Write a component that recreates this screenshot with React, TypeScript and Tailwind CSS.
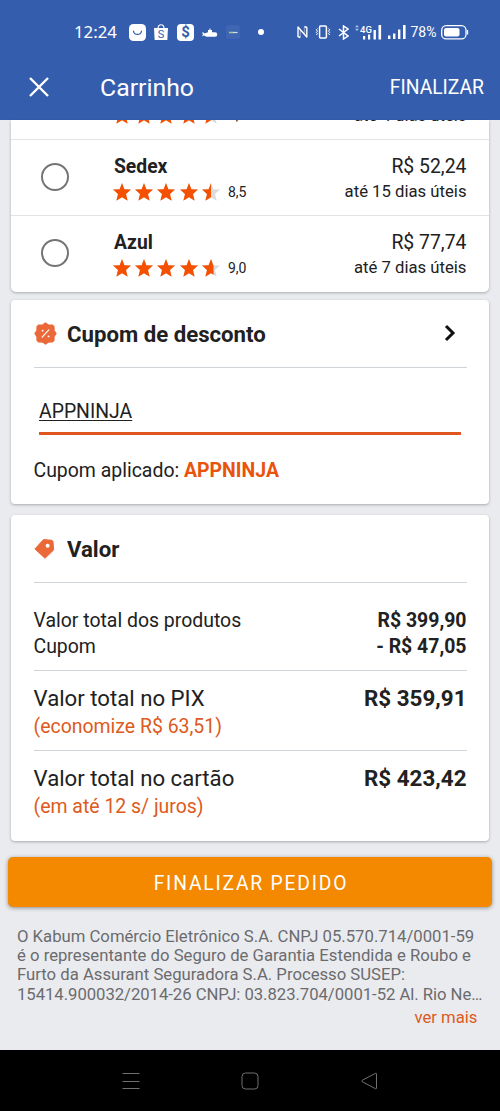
import React from "react";
import clsx from "clsx";

type Shipping = {
  name: string;
  score: string;
  lastStar: number;
  price: string;
  deadline: string;
};

const SHIPPINGS: Shipping[] = [
  { name: "Sedex", score: "8,5", lastStar: 0.5, price: "R$ 52,24", deadline: "até 15 dias úteis" },
  { name: "Azul", score: "9,0", lastStar: 0.64, price: "R$ 77,74", deadline: "até 7 dias úteis" },
];

const STAR = "M9 0 11.4 6.2 18 6.6 13 11 14.7 17.8 9 14.2 3.3 17.8 5 11 0 6.6 6.6 6.2Z";

const Star = ({ fill = 1 }: { fill?: number }) => (
  <svg width="18" height="18" viewBox="0 0 18 18">
    <path d={STAR} fill="#dcdcdc" />
    <path d={STAR} fill="#f45000" style={{ clipPath: `inset(0 ${(1 - fill) * 100}% 0 0)` }} />
  </svg>
);

const Rating = ({ score, lastStar }: { score: string; lastStar: number }) => (
  <div className="-ml-px flex h-[18px] items-center gap-[4.2px]">
    <Star />
    <Star />
    <Star />
    <Star />
    <Star fill={lastStar} />
    <span className="ml-[4px] text-[14px] leading-[17px]">{score}</span>
  </div>
);

const StatusBar = () => (
  <div className="flex h-[63px] items-center pt-px pl-[74px] text-white">
    <span className="w-[43px] font-['Noto_Sans',sans-serif] text-[16.8px] leading-none">12:24</span>
    <svg className="ml-[12px]" width="17" height="17" viewBox="0 0 17 17">
      <rect width="17" height="17" rx="4.5" fill="#fff" />
      <path d="M4.5 7c.5 4.5 7.5 4.5 8 0" fill="none" stroke="#355dae" strokeWidth="1.2" strokeLinecap="round" />
    </svg>
    <div className="relative ml-2 h-4 w-[14px]">
      <svg width="14" height="16" viewBox="0 0 14 16">
        <path d="M0 4h14l-.7 12H.7Z" fill="#fff" />
        <path d="M4 4.5c0-5 6-5 6 0" fill="none" stroke="#fff" strokeWidth="1.2" />
      </svg>
      <span className="absolute inset-x-0 top-[4.5px] text-center text-[11px] leading-[12px] text-[#355dae]">S</span>
    </div>
    <div className="ml-[9px] flex h-[17px] w-[17px] items-center justify-center rounded-[4px] bg-white text-[15px] leading-none font-bold text-[#355dae]">
      $
    </div>
    <svg className="mt-px ml-2" width="16" height="10" viewBox="0 0 16 10">
      <path d="M0 4.5h1.5l1 1L6 4.3V2h1.5V.5h1V2H10v2.2h3a2.3 2.3 0 0 1 0 4.6H4.5L2 7.5l-2 .8L1 6.5Z" fill="#fff" />
    </svg>
    <svg className="ml-2" width="14" height="14" viewBox="0 0 14 14">
      <rect width="14" height="14" rx="3" fill="#3e66b3" />
      <path d="M3 7.5h4.5" stroke="#a9c58c" strokeWidth="1.6" />
      <path d="M7 7.5h4.5" stroke="#d5dff0" strokeWidth="1.2" />
    </svg>
    <span className="ml-[18px] size-1.5 rounded-full bg-white" />
    <svg className="ml-[33px]" width="11" height="14" viewBox="0 0 11 14" fill="none" stroke="#fff" strokeWidth="1.4" strokeLinejoin="round">
      <path d="M3.3 5v7.5M7.5 1.5V9" strokeOpacity=".35" />
      <path d="M3.3 12.5 1 11.5V2L9.8 12V2.5L7.5 1.5" />
    </svg>
    <svg className="ml-[7px]" width="16" height="14" viewBox="0 0 16 14" fill="none" stroke="#fff">
      <rect x="4.6" y="1" width="6.8" height="12" rx="1" strokeWidth="1.5" />
      <path d="m2.5 3.5-1.2 1.3 1.2 1.3-1.2 1.3L2.5 8.700 1.3 10M13.5 3.5l1.2 1.3-1.2 1.3 1.2 1.3-1.2 1.3 1.2 1.3" />
    </svg>
    <svg className="ml-[7px]" width="11" height="15" viewBox="0 0 11 15" fill="none" stroke="#fff" strokeWidth="1.5">
      <path d="m1 4 9 7-4.5 3V1L10 4l-9 7" />
    </svg>
    <div className="relative ml-[6px] h-[15px] w-[27px]">
      <svg width="27" height="15" viewBox="0 0 27 15" fill="#fff">
        <path d="m2 0 2 2.3H0ZM2 6l2-2.3H0Z" opacity=".6" />
        <rect x="8" y="11" width="2.2" height="3.5" />
        <rect x="13" y="9.5" width="2.2" height="5" />
        <rect x="18.5" y="5" width="2.4" height="9.5" />
        <rect x="23.5" y="0" width="2.6" height="14.5" />
      </svg>
      <span className="absolute top-0 left-[5px] text-[9.5px] leading-[9px] font-medium">4G</span>
    </div>
    <svg className="ml-[6px]" width="18" height="14" viewBox="0 0 18 14" fill="#fff">
      <rect x="0" y="10.5" width="2.4" height="3.5" />
      <rect x="5" y="8.5" width="2.4" height="5.5" />
      <rect x="10" y="4.5" width="2.4" height="9.5" />
      <rect x="15" y="0" width="2.6" height="14" />
    </svg>
    <span className="ml-[4.5px] w-[30px] text-[14px] leading-none">78%</span>
    <svg width="28" height="15" viewBox="0 0 28 15">
      <rect x=".7" y=".7" width="24.3" height="13.2" rx="4.5" fill="none" stroke="#fff" strokeWidth="1.3" />
      <rect x="3" y="3" width="15.5" height="8.6" rx="2" fill="#fff" />
      <path d="M26.5 5v4.5" stroke="#fff" strokeWidth="1.3" />
    </svg>
  </div>
);

const Header = () => (
  <header className="h-[120px] shrink-0 bg-[#355dae] text-white">
    <StatusBar />
    <div className="flex h-12 items-center pr-4 pl-[29px]">
      <svg width="20" height="20" viewBox="0 0 20 20" stroke="#fff" strokeWidth="2.4">
        <path d="m1 1 18 18M19 1 1 19" />
      </svg>
      <h1 className="ml-[51px] pt-[2px] text-[24.8px] leading-[30px]">Carrinho</h1>
      <span className="ml-auto pt-[2px] text-[19.3px] leading-[24px]">FINALIZAR</span>
    </div>
  </header>
);

// option scrolled under the header, only its last line peeks out
const ScrolledRow = () => (
  <div className="flex h-[19px] items-end justify-between pr-[22.5px] pb-[15px] pl-[103px]">
    <Rating score="8,5" lastStar={0.5} />
    <span className="mb-[-3px] text-[16.7px] leading-[23px]">até 4 dias úteis</span>
  </div>
);

const ShippingRow = ({ item }: { item: Shipping }) => (
  <div className="flex h-[76.3px] shrink-0 border-t border-[#e2e2e6] pr-[22.5px] pl-[30px]">
    <span className="mt-[23px] size-7 rounded-full border-[2.5px] border-[#757575]" />
    <div className="ml-[45px] flex flex-col pt-[14px]">
      <span className="mb-[3px] text-[19.3px] leading-[26px] font-bold">{item.name}</span>
      <Rating score={item.score} lastStar={item.lastStar} />
    </div>
    <div className="ml-auto flex flex-col items-end pt-[14px]">
      <span className="text-[19.4px] leading-[26px]">{item.price}</span>
      <span className="text-[16.7px] leading-[23px]">{item.deadline}</span>
    </div>
  </div>
);

const Card = ({ className, children }: { className?: string; children: React.ReactNode }) => (
  <section className={clsx("mx-[11px] shrink-0 bg-white shadow-[0_1px_3px_rgba(0,0,0,0.28)]", className)}>
    {children}
  </section>
);

const CardTitle = ({ icon, title, children }: { icon: React.ReactNode; title: string; children?: React.ReactNode }) => (
  <div className="flex h-[68px] items-center border-b border-[#cfd4d9]">
    <span className="w-[33.5px]">{icon}</span>
    <h2 className="pt-[2px] text-[22.2px] leading-none font-bold">{title}</h2>
    {children}
  </div>
);

const CouponIcon = () => (
  <svg width="23" height="23" viewBox="0 0 24 24">
    <path
      d="M12 1.2 14.8 3.2 19 3.3 20.7 5 20.8 9.2 22.8 12 20.8 14.8 20.7 19 19 20.7 14.8 20.8 12 22.8 9.2 20.8 5 20.7 3.3 19 3.2 14.8 1.2 12 3.2 9.2 3.3 5 5 3.3 9.2 3.2Z"
      fill="#eb6839"
      stroke="#eb6839"
      strokeWidth="1.6"
      strokeLinejoin="round"
    />
    <path d="m8.5 15.8 7-7.6" stroke="#fff" strokeWidth="1.3" strokeLinecap="round" />
    <circle cx="9" cy="9" r="1" fill="#fff" />
    <circle cx="15.2" cy="15" r="1" fill="#fff" />
  </svg>
);

const TagIcon = () => (
  <svg className="mt-px" width="22" height="22" viewBox="0 0 22 22">
    <path
      d="M9.5 1.6 18 2.3 19 3.5l.6 8.5L11 20.3.9 10.9Z"
      fill="#eb6839"
      stroke="#eb6839"
      strokeLinejoin="round"
    />
    <circle cx="13.6" cy="7.8" r="2" fill="#fff" />
  </svg>
);

const TotalRow = ({ label, note, value }: { label: string; note: string; value: string }) => (
  <div className="flex h-20 justify-between border-t border-[#cfd4d9] pt-[13px]">
    <div className="flex flex-col">
      <span className="text-[22.2px] leading-[28px]">{label}</span>
      <span className="pt-px text-[19.45px] leading-[28px] text-[#dd5a20]">{note}</span>
    </div>
    <span className="text-[22.4px] leading-[28px] font-bold">{value}</span>
  </div>
);

const NavBar = () => (
  <nav className="mt-auto flex h-[61px] shrink-0 items-center justify-center gap-[101px] bg-black pr-px">
    <svg width="18" height="18" viewBox="0 0 18 18" stroke="#707070">
      <path d="M.5 1.5h17M.5 9.5h17M.5 16.5h17" />
    </svg>
    <svg width="18" height="18" viewBox="0 0 18 18" fill="none" stroke="#707070">
      <rect x="1" y="1" width="16" height="16" rx="3.5" />
    </svg>
    <svg width="18" height="18" viewBox="0 0 18 18" fill="none" stroke="#707070">
      <path d="M15.5 1.3 2.2 8.3q-1 .7 0 1.4l13.3 7q1 .3 1-.7V2q0-1-1-.7Z" />
    </svg>
  </nav>
);

const App = () => {
  return (
    <div className="flex h-[1111px] w-[500px] flex-col overflow-hidden bg-[#eaebef] font-[Roboto,sans-serif] whitespace-nowrap text-[#212121]">
      <Header />

      <Card className="h-[171.5px] overflow-hidden rounded-b-[5px]">
        <ScrolledRow />
        {SHIPPINGS.map((item) => (
          <ShippingRow key={item.name} item={item} />
        ))}
      </Card>

      <Card className="mt-[8px] h-[204px] rounded-[4px] px-[22.5px]">
        <CardTitle icon={<CouponIcon />} title="Cupom de desconto">
          <svg className="mr-[11px] ml-auto" width="12" height="18" viewBox="0 0 12 18" fill="none" stroke="#111" strokeWidth="3">
            <path d="m2 2 7 7-7 7" />
          </svg>
        </CardTitle>
        <div className="mx-[5.5px] mt-[31px] h-[36px] border-b-[3px] border-[#e0561f]">
          <span className="text-[19.4px] leading-[26px] underline decoration-1 underline-offset-[2px] [text-decoration-skip-ink:none]">
            APPNINJA
          </span>
        </div>
        <p className="mt-[23px] text-[19.45px] leading-[26px]">
          Cupom aplicado: <b className="text-[#e8540c]">APPNINJA</b>
        </p>
      </Card>

      <Card className="mt-[11px] h-[326px] rounded-[4px] px-[22.5px]">
        <CardTitle icon={<TagIcon />} title="Valor" />
        <div className="flex h-[87px] flex-col pt-[25px] text-[19.45px] leading-[26.5px]">
          <div className="flex justify-between">
            <span>Valor total dos produtos</span>
            <b>R$ 399,90</b>
          </div>
          <div className="flex justify-between">
            <span>Cupom</span>
            <b>- R$ 47,05</b>
          </div>
        </div>
        <TotalRow label="Valor total no PIX" note="(economize R$ 63,51)" value="R$ 359,91" />
        <TotalRow label="Valor total no cartão" note="(em até 12 s/ juros)" value="R$ 423,42" />
      </Card>

      <button className="mx-2 mt-4 h-[50px] shrink-0 rounded-[5px] bg-[#f48900] pt-[4px] pl-[2px] text-[19.3px] leading-none tracking-[1.8px] text-white shadow-[0_1px_4px_rgba(0,0,0,0.4)]">
        FINALIZAR PEDIDO
      </button>

      <footer className="mt-5 px-[17px] text-[16.7px] leading-[19.4px] text-[#6b6b6e]">
        <p>O Kabum Comércio Eletrônico S.A. CNPJ 05.570.714/0001-59</p>
        <p>é o representante do Seguro de Garantia Estendida e Roubo e</p>
        <p>Furto da Assurant Seguradora S.A. Processo SUSEP:</p>
        <p className="tracking-[-0.04px]">15414.900032/2014-26 CNPJ: 03.823.704/0001-52 Al. Rio Ne…</p>
        <p className="mt-[4px] pr-[5.5px] text-right text-[#dd5a20]">ver mais</p>
      </footer>

      <NavBar />
    </div>
  );
};

export default App;
